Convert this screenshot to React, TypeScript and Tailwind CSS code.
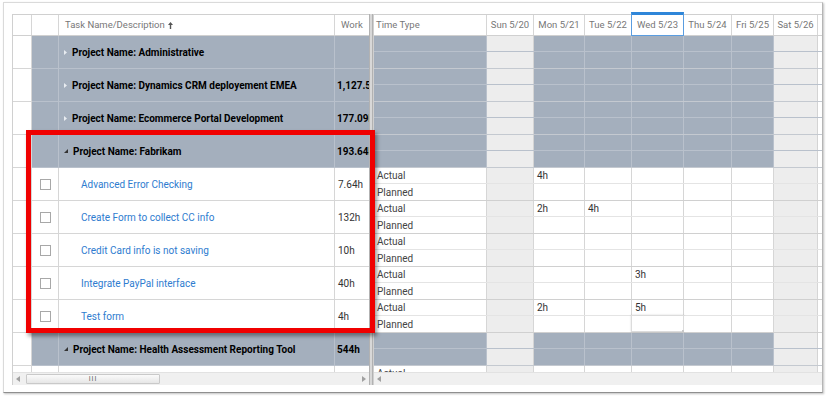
type Project = { name: string; work: string; expanded?: boolean };
type Task = { name: string; work: string; actual: Record<string, string> };

const GRAY = 'bg-[#a4afbd]';

const topProjects: Project[] = [
  { name: 'Administrative', work: '' },
  { name: 'Dynamics CRM deployement EMEA', work: '1,127.5h' },
  { name: 'Ecommerce Portal Development', work: '177.09h' },
  { name: 'Fabrikam', work: '193.64h', expanded: true },
];

const tasks: Task[] = [
  { name: 'Advanced Error Checking', work: '7.64h', actual: { mon: '4h' } },
  { name: 'Create Form to collect CC info', work: '132h', actual: { mon: '2h', tue: '4h' } },
  { name: 'Credit Card info is not saving', work: '10h', actual: {} },
  { name: 'Integrate PayPal interface', work: '40h', actual: { wed: '3h' } },
  { name: 'Test form', work: '4h', actual: { mon: '2h', wed: '5h' } },
];

const days = [
  { key: 'sun', label: 'Sun 5/20', w: 'w-[47px]', weekend: true },
  { key: 'mon', label: 'Mon 5/21', w: 'w-[51px]' },
  { key: 'tue', label: 'Tue 5/22', w: 'w-[47px]' },
  { key: 'wed', label: 'Wed 5/23', w: 'w-[52px]', selected: true },
  { key: 'thu', label: 'Thu 5/24', w: 'w-[48px]' },
  { key: 'fri', label: 'Fri 5/25', w: 'w-[42px]' },
  { key: 'sat', label: 'Sat 5/26', w: 'w-[44px]', weekend: true },
];

function Caret({ expanded }: { expanded?: boolean }) {
  return expanded ? (
    <svg width="4" height="4" viewBox="0 0 4 4" className="shrink-0">
      <path d="M4 0 L4 4 L0 4 Z" fill="#333" />
    </svg>
  ) : (
    <svg width="3" height="5" viewBox="0 0 3 5" className="shrink-0">
      <path d="M0 0 L3 2.5 L0 5 Z" fill="#e8ecf1" />
    </svg>
  );
}

function LeftProjectRow({ p }: { p: Project }) {
  return (
    <div className="flex h-[33px] shrink-0">
      <div className="w-[19px] border-r border-b border-[#d6d6d6] bg-white" />
      <div className={`w-[27px] border-r border-b border-[#b9c1cc] ${GRAY}`} />
      <div className={`w-[276px] flex items-center gap-[5px] pl-[5px] border-r border-b border-[#b9c1cc] ${GRAY}`}>
        <Caret expanded={p.expanded} />
        <span className="font-bold text-black">Project Name: {p.name}</span>
      </div>
      <div className={`flex-1 flex items-center pl-[2px] border-b border-[#b9c1cc] overflow-hidden whitespace-nowrap font-bold text-black ${GRAY}`}>
        {p.work}
      </div>
    </div>
  );
}

function LeftTaskRow({ t }: { t: Task }) {
  return (
    <div className="flex h-[33px] shrink-0 bg-white">
      <div className="w-[19px] border-r border-b border-[#d6d6d6]" />
      <div className="w-[27px] flex items-center justify-center border-r border-b border-[#d6d6d6]">
        <div className="w-[11px] h-[11px] border border-[#a8a8a8] bg-white" />
      </div>
      <div className="w-[276px] flex items-center pl-[22px] border-r border-b border-[#d6d6d6] text-[#2e7ccf]">
        {t.name}
      </div>
      <div className="flex-1 flex items-center pl-[3px] border-b border-[#d6d6d6] text-[#333]">{t.work}</div>
    </div>
  );
}

function RightProjectRow() {
  const sub = (first: boolean) => (
    <div className={`flex h-[16px] ${first ? 'border-b border-[#b9c1cc]' : ''}`}>
      <div className={`w-[113px] border-r border-[#b9c1cc] ${GRAY}`} />
      {days.map((d) => (
        <div
          key={d.key}
          className={`${d.w} border-r ${d.weekend ? 'bg-[#ededed] border-[#d4d4d4]' : `${GRAY} border-[#b9c1cc]`}`}
        />
      ))}
    </div>
  );
  return (
    <div className="flex flex-col h-[33px] shrink-0 border-b border-[#c4c9d0]">
      {sub(true)}
      {sub(false)}
    </div>
  );
}

function RightTaskRow({ t, focus }: { t: Task; focus?: boolean }) {
  const sub = (label: string, vals: Record<string, string>, first: boolean) => (
    <div className={`flex h-[16px] ${first ? 'border-b border-[#e4e4e4]' : ''}`}>
      <div className="w-[113px] flex items-center pl-[3px] border-r border-[#d6d6d6] text-[#444]">{label}</div>
      {days.map((d) => (
        <div
          key={d.key}
          className={`${d.w} relative flex items-center pl-[3px] border-r border-[#d6d6d6] text-[#333] ${d.weekend ? 'bg-[#ededed]' : 'bg-white'}`}
        >
          {vals[d.key] ?? ''}
          {focus && !first && d.key === 'wed' && (
            <div className="absolute -left-px -top-px w-[53px] h-[17px] border border-[#dcdcdc] shadow-[0_0_2px_rgba(0,0,0,0.15)]">
              <div className="absolute -right-[2px] -bottom-[2px] w-[3px] h-[3px] bg-[#c9c9c9]" />
            </div>
          )}
        </div>
      ))}
    </div>
  );
  return (
    <div className="flex flex-col h-[33px] shrink-0 border-b border-[#d0d0d0]">
      {sub('Actual', t.actual, true)}
      {sub('Planned', {}, false)}
    </div>
  );
}

function ScrollArrow({ dir }: { dir: 'left' | 'right' }) {
  return (
    <svg width="4" height="6" viewBox="0 0 4 6" className="shrink-0">
      <path d={dir === 'left' ? 'M4 0 L0 3 L4 6 Z' : 'M0 0 L4 3 L0 6 Z'} fill="#a0a0a0" />
    </svg>
  );
}

export default function App() {
  const health: Project = { name: 'Health Assessment Reporting Tool', work: '544h', expanded: true };
  const extra: Task = { name: '', work: '', actual: {} };

  return (
    <div className="w-[827px] h-[397px] bg-white overflow-hidden pt-[2px] pl-[3px] font-['Roboto',sans-serif] text-[10px]">
      <div className="relative w-[820px] h-[391px] border border-[#dadada] border-b-[#8f8f8f] border-r-[#b5b5b5] shadow-[1px_1px_2px_rgba(0,0,0,0.25)] bg-white pt-[11px] pl-[8px]">
        <div className="flex h-[371px]">
          {/* left grid */}
          <div className="w-[357px] flex flex-col border-l border-t border-[#d0d0d0]">
            <div className="flex h-[21px] shrink-0 border-b border-[#d0d0d0] bg-white text-[#777] text-[9.5px]">
              <div className="w-[19px] border-r border-[#d6d6d6]" />
              <div className="w-[27px] border-r border-[#d6d6d6]" />
              <div className="w-[276px] flex items-center gap-[3px] pl-[6px] border-r border-[#d6d6d6]">
                Task Name/Description
                <svg width="5" height="7" viewBox="0 0 5 7">
                  <path d="M2.5 0 L5 3 L3.2 3 L3.2 7 L1.8 7 L1.8 3 L0 3 Z" fill="#555" />
                </svg>
              </div>
              <div className="flex-1 flex items-center pl-[6px]">Work</div>
            </div>
            <div className="h-[337px] flex flex-col overflow-hidden">
              {topProjects.map((p) => (
                <LeftProjectRow key={p.name} p={p} />
              ))}
              {tasks.map((t) => (
                <LeftTaskRow key={t.name} t={t} />
              ))}
              <LeftProjectRow p={health} />
              <LeftTaskRow t={extra} />
            </div>
            <div className="h-[13px] shrink-0 flex items-center bg-[#f0f0f0] border-t border-[#e2e2e2] px-[3px]">
              <ScrollArrow dir="left" />
              <div className="ml-[6px] w-[134px] h-[10px] flex items-center justify-center rounded-[1px] border border-[#c9c9c9] bg-gradient-to-b from-[#fafafa] to-[#e6e6e6] text-[#666] text-[7px] leading-none tracking-[1px]">
                III
              </div>
              <div className="flex-1" />
              <ScrollArrow dir="right" />
            </div>
          </div>

          {/* splitter */}
          <div className="w-[4px] h-[371px] bg-[#d8d8d8] border-x border-[#b2b2b2]" />

          {/* right grid */}
          <div className="flex-1 flex flex-col border-l border-t border-[#d0d0d0]">
            <div className="flex h-[21px] shrink-0 border-b border-[#d0d0d0] bg-white text-[#777] text-[9.5px]">
              <div className="w-[113px] flex items-center pl-[2px] border-r border-[#d6d6d6]">Time Type</div>
              {days.map((d) => (
                <div
                  key={d.key}
                  className={`${d.w} relative flex items-center justify-center border-r border-[#d6d6d6] whitespace-nowrap`}
                >
                  {d.label}
                  {d.selected && (
                    <div className="absolute -left-px -top-[3px] -right-px -bottom-px border border-[#5a9de0] border-t-[3px] border-t-[#2f86d9]" />
                  )}
                </div>
              ))}
            </div>
            <div className="h-[337px] flex flex-col overflow-hidden">
              {topProjects.map((p) => (
                <RightProjectRow key={p.name} />
              ))}
              {tasks.map((t, i) => (
                <RightTaskRow key={t.name} t={t} focus={i === tasks.length - 1} />
              ))}
              <RightProjectRow />
              <RightTaskRow t={extra} />
            </div>
            <div className="h-[13px] shrink-0 flex items-center bg-[#f0f0f0] border-t border-[#e2e2e2] px-[3px]">
              <ScrollArrow dir="left" />
            </div>
          </div>
        </div>

        {/* annotation highlight */}
        <div className="absolute left-[22px] top-[127px] w-[349px] h-[203px] border-[5px] border-[#f00000] shadow-[2px_3px_4px_rgba(0,0,0,0.4)]" />
      </div>
    </div>
  );
}
